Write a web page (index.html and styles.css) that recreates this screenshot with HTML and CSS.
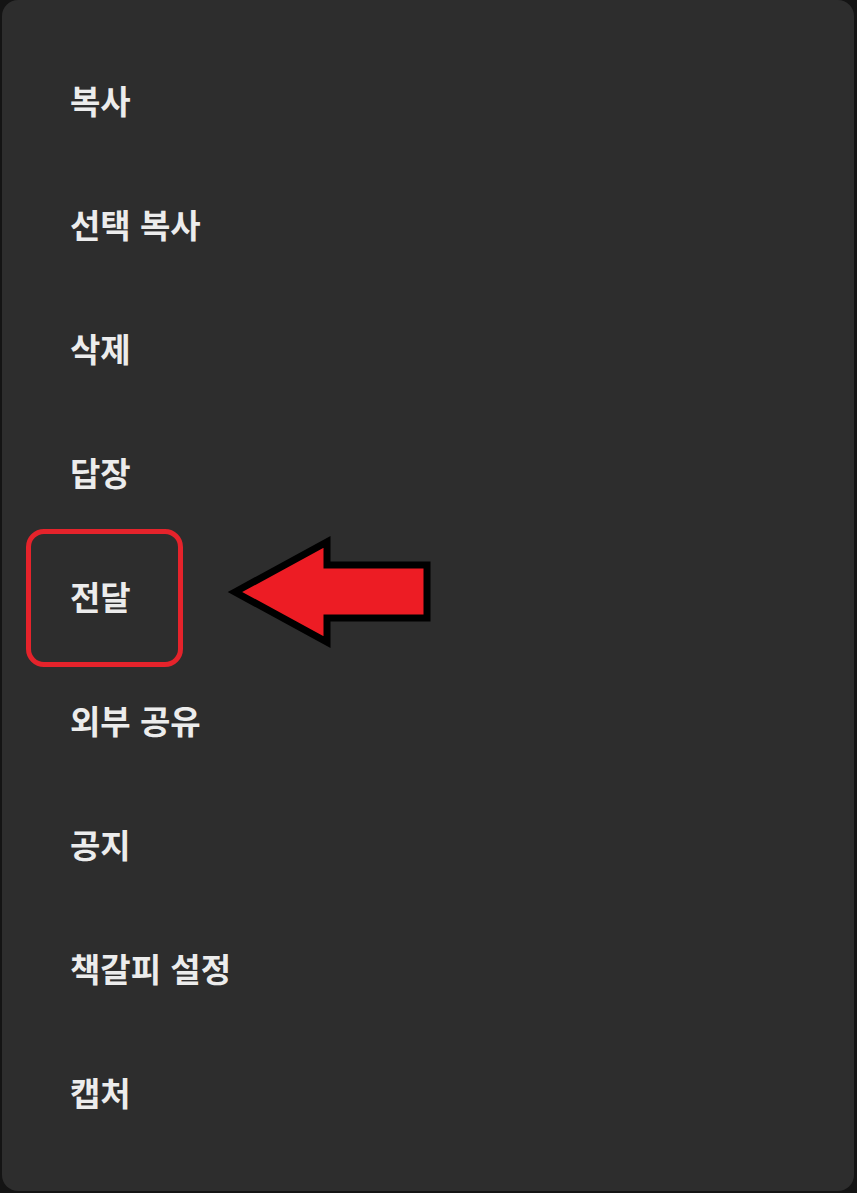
FILE: index.html
```html
<!DOCTYPE html>
<html lang="ko">
  <head>
    <meta charset="UTF-8" />
    <meta name="viewport" content="width=device-width, initial-scale=1.0" />
    <title>메시지 메뉴</title>
    <link rel="stylesheet" href="styles.css">
  </head>
  <body>
    <div class="sheet">
      <ul class="menu">
        <li class="item">복사</li>
        <li class="item">선택 복사</li>
        <li class="item">삭제</li>
        <li class="item">답장</li>
        <li class="item marked">
          전달
          <span class="mark-box"></span>
          <svg class="arrow" width="210" height="122" viewBox="0 0 210 122">
            <polygon points="10,62 102,12 102,35 202,35 202,88 102,88 102,112"
              fill="#ed1c24" stroke="#000" stroke-width="7" stroke-linejoin="miter" />
          </svg>
        </li>
        <li class="item">외부 공유</li>
        <li class="item">공지</li>
        <li class="item">책갈피 설정</li>
        <li class="item">캡처</li>
      </ul>
    </div>
  </body>
</html>
```

FILE: styles.css
```css
html,
body {
  margin: 0;
  padding: 0;
  background: #141414;
}
.sheet {
  margin: 0 3px 2px 2px;
  height: 1191px;
  background: #2d2d2d;
  border-radius: 16px;
  overflow: hidden;
}
.menu {
  list-style: none;
  margin: 0;
  padding: 38px 0 0 0;
}
.item {
  position: relative;
  display: flex;
  align-items: center;
  height: 124px;
  padding-left: 68px;
  font-family: "Noto Sans CJK KR", "Noto Sans", sans-serif;
  font-weight: 700;
  font-size: 33px;
  color: #ececec;
}

/* red highlight around the forward item */
.mark-box {
  position: absolute;
  left: 24px;
  top: -5px;
  width: 147px;
  height: 128px;
  border: 5px solid #e5232b;
  border-radius: 18px;
}
.arrow {
  position: absolute;
  left: 223px;
  top: -4px;
}
```
